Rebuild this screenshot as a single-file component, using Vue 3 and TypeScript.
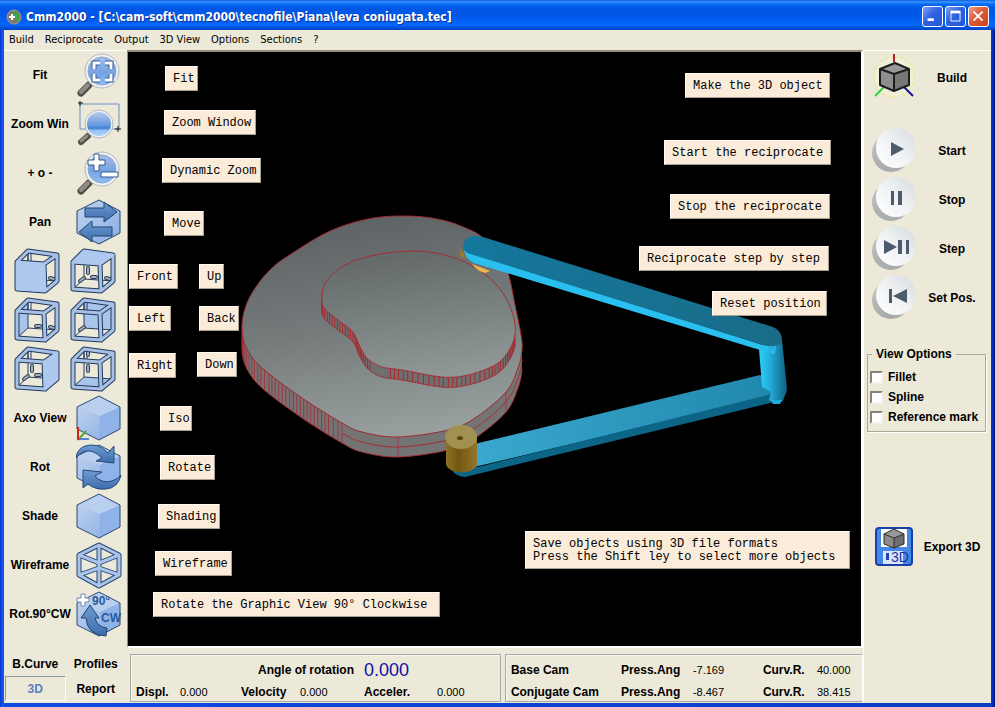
<script setup lang="ts">
import { ref } from 'vue'

type Point = [number, number]

interface Tool {
  id: string
  label: string
}

interface Note {
  text: string
  x: number
  y: number
  w: number
}

const menus = ['Build', 'Reciprocate', 'Output', '3D View', 'Options', 'Sections', '?']

const zoomTools: Tool[] = [
  { id: 'fit', label: 'Fit' },
  { id: 'window', label: 'Zoom Win' },
  { id: 'dynamic', label: '+ o -' },
  { id: 'pan', label: 'Pan' },
]

const viewTools: Tool[] = [
  { id: 'axo', label: 'Axo View' },
  { id: 'rot', label: 'Rot' },
  { id: 'shade', label: 'Shade' },
  { id: 'wire', label: 'Wireframe' },
  { id: 'rot90', label: 'Rot.90°CW' },
]

const stubV = 'M18 22V27'
const stubD = 'M10 35L14 32'
const stubH = 'M22 31H26'
const stubR = 'M36 32L40 33'

const frame = 'M3 16L30 18L31 45L3 43ZM3 16L14 5L43 9L30 18M43 9V35L31 45'

const cubes = [
  { id: 'front', face: 'M3 16L30 18L31 45L3 43Z', solid: true, stubs: stubR },
  { id: 'up', face: 'M3 16L14 5L43 9L30 18Z', solid: true, stubs: stubV + stubD + stubH + stubR },
  { id: 'left', face: 'M3 16L14 5V33L3 43Z', solid: false, stubs: stubH + stubR },
  { id: 'back', face: 'M14 5L43 9V35L14 33Z', solid: false, stubs: stubD },
  { id: 'right', face: 'M30 18L43 9V35L31 45Z', solid: true, stubs: stubV + stubD + stubH },
  { id: 'down', face: 'M3 43L14 33L43 35L31 45Z', solid: false, stubs: 'M18 7V11' + stubV },
]

const players = [
  { label: 'Start', shape: 'M20 16L33 23L20 30Z' },
  { label: 'Stop', shape: 'M20 16H23V30H20ZM27 16H31V30H27Z' },
  { label: 'Step', shape: 'M13 16L26 23L13 30ZM27 16H31V30H27ZM35 16H38V30H35Z' },
  { label: 'Set Pos.', shape: 'M18 16H21V30H18ZM36 16V30L22 23Z' },
]

const options = ref([
  { label: 'Fillet', on: false },
  { label: 'Spline', on: false },
  { label: 'Reference mark', on: false },
])

const notes: Note[] = [
  { text: 'Fit', x: 37, y: 14, w: 33 },
  { text: 'Zoom Window', x: 36, y: 58, w: 92 },
  { text: 'Dynamic Zoom', x: 34, y: 106, w: 99 },
  { text: 'Move', x: 36, y: 159, w: 40 },
  { text: 'Front', x: 1, y: 212, w: 49 },
  { text: 'Up', x: 71, y: 212, w: 25 },
  { text: 'Left', x: 1, y: 254, w: 42 },
  { text: 'Back', x: 71, y: 254, w: 40 },
  { text: 'Right', x: 1, y: 301, w: 47 },
  { text: 'Down', x: 69, y: 300, w: 40 },
  { text: 'Iso', x: 32, y: 354, w: 32 },
  { text: 'Rotate', x: 32, y: 403, w: 55 },
  { text: 'Shading', x: 30, y: 452, w: 62 },
  { text: 'Wireframe', x: 27, y: 499, w: 77 },
  { text: 'Rotate the Graphic View 90° Clockwise', x: 25, y: 540, w: 287 },
  { text: 'Make the 3D object', x: 557, y: 21, w: 145 },
  { text: 'Start the reciprocate', x: 536, y: 88, w: 167 },
  { text: 'Stop the reciprocate', x: 542, y: 142, w: 160 },
  { text: 'Reciprocate step by step', x: 511, y: 194, w: 190 },
  { text: 'Reset position', x: 584, y: 239, w: 115 },
  {
    text: 'Save objects using 3D file formats\nPress the Shift ley to select more objects',
    x: 397,
    y: 479,
    w: 325,
  },
]

/* Cam outlines, clockwise from the leftmost point of the top face. */
const baseCam: Point[] = [
  [242, 325], [247, 303], [258, 284], [272, 268], [288, 256], [328, 232], [368, 219],
  [408, 216], [442, 220], [468, 229], [482, 237], [497, 253], [508, 273], [515, 305],
  [521, 335], [522, 350], [518, 368], [506, 392], [475, 418], [448, 430], [398, 437],
  [362, 432], [342, 423], [302, 398], [262, 368], [246, 347],
]
const conjugateCam: Point[] = [
  [322, 298], [326, 282], [345, 265], [375, 255], [415, 251], [452, 257], [482, 272],
  [502, 292], [513, 315], [515, 335], [508, 352], [495, 365], [468, 375], [442, 377],
  [402, 370], [382, 367], [368, 359], [360, 347], [353, 332], [338, 320], [324, 308],
]

const STEPS = 24

function smooth(points: Point[]): Point[] {
  const n = points.length
  const out: Point[] = []
  for (let i = 0; i < n; i++) {
    const a = points[(i + n - 1) % n]
    const b = points[i]
    const c = points[(i + 1) % n]
    const d = points[(i + 2) % n]
    for (let s = 0; s < STEPS; s++) {
      const t = s / STEPS
      const at = (k: 0 | 1) =>
        0.5 *
        (2 * b[k] +
          (c[k] - a[k]) * t +
          (2 * a[k] - 5 * b[k] + 4 * c[k] - d[k]) * t * t +
          (3 * b[k] - a[k] - 3 * c[k] + d[k]) * t * t * t)
      out.push([at(0), at(1)])
    }
  }
  return out
}

const toPath = (pts: Point[], dy = 0) =>
  'M' + pts.map(([x, y]) => `${x.toFixed(1)} ${(y + dy).toFixed(1)}`).join('L')

function wall(curve: Point[], from: number, depth: number) {
  const rim = [...curve.slice(from * STEPS), curve[0]]
  return {
    rim,
    fill: toPath(rim) + 'L' + toPath([...rim].reverse(), depth).slice(1) + 'Z',
    lower: toPath(rim, depth),
  }
}

function ribs(rim: Point[], depth: number, gap: number, x0: number, x1: number) {
  let d = ''
  let run = gap
  for (let i = 1; i < rim.length; i++) {
    const [x, y] = rim[i]
    run += Math.hypot(x - rim[i - 1][0], y - rim[i - 1][1])
    if (run >= gap && x >= x0 && x <= x1) {
      d += `M${x.toFixed(1)} ${y.toFixed(1)}v${depth}`
      run = 0
    }
  }
  return d
}

const baseCurve = smooth(baseCam)
const conjCurve = smooth(conjugateCam)
const baseWall = wall(baseCurve, 15, 20)
const conjWall = wall(conjCurve, 9, 10)

const scene = {
  baseTop: toPath(baseCurve) + 'Z',
  conjTop: toPath(conjCurve) + 'Z',
  baseMid: toPath(baseWall.rim.filter(([x], i) => x > 342 || i < STEPS), 10),
  baseRibs: ribs(baseWall.rim, 20, 4, 240, 343) + 'M398 437v20M506 392v20',
  conjRibs:
    ribs(conjWall.rim, 10, 3, 320, 370) +
    ribs(conjWall.rim, 10, 4, 389, 490) +
    ribs(conjWall.rim, 10, 3, 490, 516),
}
</script>

<template>
  <div class="window">
    <header class="title-bar">
      <svg class="app-icon" viewBox="0 0 16 16" aria-hidden="true">
        <circle cx="8" cy="8" r="7" fill="#80776f" stroke="#a59b90" />
        <path d="M7 2A6 6 0 0 1 11 13Q8 9 7 2Z" fill="#3da548" />
        <path d="M6 5V11M3 8H9" stroke="#fff" stroke-width="2" />
      </svg>
      <h1>Cmm2000 - [C:\cam-soft\cmm2000\tecnofile\Piana\leva coniugata.tec]</h1>
      <div class="window-buttons">
        <button type="button" aria-label="Minimize">
          <svg viewBox="0 0 21 21"><path d="M5 14H12" stroke="#fff" stroke-width="3" /></svg>
        </button>
        <button type="button" aria-label="Maximize">
          <svg viewBox="0 0 21 21">
            <path d="M5 5.500H16" stroke="#fff" stroke-width="3" />
            <path d="M5.500 6V15.500H15.500V6" fill="none" stroke="#fff" />
          </svg>
        </button>
        <button type="button" class="close" aria-label="Close">
          <svg viewBox="0 0 21 21"><path d="M5 5L15 15M15 5L5 15" stroke="#fff" stroke-width="2" /></svg>
        </button>
      </div>
    </header>

    <nav class="menu-bar">
      <button v-for="menu in menus" :key="menu" type="button">{{ menu }}</button>
    </nav>

    <svg class="defs" aria-hidden="true">
      <defs>
        <linearGradient id="hexFill" x1="0" y1="0" x2="1" y2="1">
          <stop offset="0" stop-color="#c3d5f0" />
          <stop offset="1" stop-color="#86ace4" />
        </linearGradient>
        <linearGradient id="arrowFill" x1="0" y1="0" x2="0" y2="1">
          <stop offset="0" stop-color="#6d9bd2" />
          <stop offset="1" stop-color="#3d6cab" />
        </linearGradient>
        <linearGradient id="lensFill" x1="0" y1="0" x2="0" y2="1">
          <stop offset="0" stop-color="#a3bfe8" />
          <stop offset="0.55" stop-color="#76a2e2" />
          <stop offset="1" stop-color="#8fbcf4" />
        </linearGradient>
        <linearGradient id="lensBand" x1="0" y1="0" x2="0" y2="1">
          <stop offset="0" stop-color="#b4cbee" />
          <stop offset="0.6" stop-color="#6294dc" />
          <stop offset="0.62" stop-color="#3f83d4" />
          <stop offset="0.72" stop-color="#4d8edd" />
          <stop offset="0.74" stop-color="#94c0f5" />
          <stop offset="1" stop-color="#b2d4fb" />
        </linearGradient>
        <linearGradient id="knobFill" x1="1" y1="0" x2="0" y2="1">
          <stop offset="0" stop-color="#d5dade" />
          <stop offset="0.5" stop-color="#f0f2f4" />
          <stop offset="1" stop-color="#ffffff" />
        </linearGradient>
        <linearGradient id="knobShade" x1="0" y1="0" x2="0" y2="1">
          <stop offset="0" stop-color="#c8c8c2" />
          <stop offset="1" stop-color="#a7aaab" />
        </linearGradient>
      </defs>
    </svg>

    <div class="workspace">
      <aside class="left-panel">
        <button v-for="tool in zoomTools" :key="tool.id" type="button" class="tool">
          <span>{{ tool.label }}</span>
          <svg class="icon" viewBox="0 0 46 49" aria-hidden="true">
            <template v-if="tool.id === 'fit' || tool.id === 'dynamic'">
              <path d="M13 35L5 43" stroke="#504c48" stroke-width="7" stroke-linecap="round" />
              <path d="M12 35L5 42" stroke="#918b84" stroke-width="4" stroke-linecap="round" />
              <circle cx="26" cy="21" r="17" fill="#eef0f1" stroke="#b4b8bc" />
              <circle cx="26" cy="21" r="14" fill="url(#lensFill)" stroke="#8fa8cb" />
            </template>
            <g v-if="tool.id === 'fit'" fill="none" stroke-linejoin="miter">
              <path d="M18 19V13H24M29 13H35V19M35 24V30H29M24 30H18V24" stroke="#31588f" stroke-width="5" />
              <path d="M18 19V13H24M29 13H35V19M35 24V30H29M24 30H18V24" stroke="#fff" stroke-width="3" />
            </g>
            <g v-if="tool.id === 'dynamic'" stroke="#33598f" fill="#fff">
              <path d="M18 6H23V12H29V17H23V23H18V17H12V12H18Z" />
              <path d="M25 24H42V29H25Z" />
            </g>
            <g v-if="tool.id === 'window'">
              <path d="M4 5H43V30H4Z" fill="none" stroke="#6b8fc6" />
              <path d="M12 37L5 43" stroke="#504c48" stroke-width="6" stroke-linecap="round" />
              <path d="M11 37L5 42" stroke="#918b84" stroke-width="3" stroke-linecap="round" />
              <circle cx="23" cy="25" r="14" fill="#eef0f1" stroke="#b4b8bc" />
              <circle cx="23" cy="25" r="12" fill="url(#lensBand)" />
              <path d="M4 2V7M2 4H7M42 27V33M39 30H45" stroke="#111" />
            </g>
            <g v-if="tool.id === 'pan'" stroke="#21446f" stroke-linejoin="round">
              <path d="M23 3L44 14V36L23 47L1 36V14Z" fill="url(#hexFill)" />
              <path d="M9 11H28V5L41 15L28 25V20H9Z" fill="url(#arrowFill)" />
              <path d="M36 30H16V24L3 35L16 45V39H36Z" fill="url(#arrowFill)" />
            </g>
          </svg>
        </button>

        <div class="cube-grid">
          <button v-for="cube in cubes" :key="cube.id" type="button" :aria-label="cube.id">
            <svg class="icon" viewBox="0 0 46 49" aria-hidden="true">
              <path v-if="!cube.solid" :d="cube.face" fill="#a9c4ea" />
              <path d="M14 5V33L3 43M14 33L43 35" fill="none" stroke="#233d60" />
              <path d="M17 6V15M14 7V15" stroke="#233d60" />
              <path :d="cube.stubs" stroke="#2e3f55" stroke-width="4" stroke-linecap="round" />
              <path :d="cube.stubs" stroke="#a5aebc" stroke-width="2" stroke-linecap="round" />
              <g fill="none" stroke-linejoin="round">
                <path :d="frame" stroke="#1f3a5e" stroke-width="5" />
                <path :d="frame" stroke="#a9c0e4" stroke-width="3" />
              </g>
              <path v-if="cube.solid" :d="cube.face" fill="#aec8ee" stroke="#aec8ee" stroke-width="2" />
            </svg>
          </button>
        </div>

        <button v-for="tool in viewTools" :key="tool.id" type="button" class="tool">
          <span>{{ tool.label }}</span>
          <svg class="icon" viewBox="0 0 46 49" aria-hidden="true">
            <g v-if="tool.id !== 'wire'">
              <path d="M23 3L44 14V36L23 47L1 36V14Z" fill="url(#hexFill)" />
              <path d="M23 3L44 14L24 23L1 14Z" fill="#b9cfef" />
              <path d="M24 23L44 14V36L23 47Z" fill="#8fb3e8" />
              <path d="M23 3L44 14V36L23 47L1 36V14Z" fill="none" stroke="#2c4a73" />
            </g>
            <g v-if="tool.id === 'axo'" stroke-width="2">
              <path d="M2 47L10 38" stroke="#58a832" />
              <path d="M2 46H13" stroke="#5b82c8" />
              <path d="M2 34V47" stroke="#d2201c" />
            </g>
            <g v-if="tool.id === 'rot'" fill="url(#arrowFill)" stroke="#244a7d" stroke-linejoin="round">
              <path d="M0 16Q1 7 9 4Q22 0 32 11L38 4V21L20 19L26 16Q16 6 7 10Q3 12 0 16Z" />
              <path d="M45 33Q42 46 30 47Q19 48 12 42L7 46V28L26 30L19 34Q26 42 36 39Q42 37 45 33Z" />
            </g>
            <g v-if="tool.id === 'wire'" fill="none" stroke-linejoin="round">
              <path d="M23 5L43 15V35L23 46L3 35V15ZM23 5V46M3 15L23 23L43 15M3 35L23 28L43 35" stroke="#294970" stroke-width="5" />
              <path d="M23 5L43 15V35L23 46L3 35V15ZM23 5V46M3 15L23 23L43 15M3 35L23 28L43 35" stroke="#a9c3eb" stroke-width="3" />
            </g>
            <g v-if="tool.id === 'rot90'">
              <path d="M5 5H9V9H13V13H9V17H5V13H1V9H5Z" fill="#fff" stroke="#7089ad" />
              <text x="16" y="16" class="glyph">90°</text>
              <text x="25" y="33" class="glyph">CW</text>
              <path d="M14 16L23 29H19Q21 38 31 39L30 47Q11 46 10 29H5Z" fill="url(#arrowFill)" stroke="#21446f" />
            </g>
          </svg>
        </button>

        <div class="page-tabs">
          <button type="button">B.Curve</button>
          <button type="button">Profiles</button>
          <button type="button" class="active">3D</button>
          <button type="button">Report</button>
        </div>
      </aside>

      <main class="center">
        <section class="viewport" aria-label="3D view">
          <svg class="scene" viewBox="128 52 733 595" aria-hidden="true">
            <defs>
              <linearGradient id="steel" x1="0.3" y1="0" x2="0.5" y2="1">
                <stop offset="0" stop-color="#5c6263" />
                <stop offset="0.5" stop-color="#757b7b" />
                <stop offset="1" stop-color="#98a09f" />
              </linearGradient>
              <linearGradient id="steelSmall" x1="0.3" y1="0" x2="0.5" y2="1">
                <stop offset="0" stop-color="#626868" />
                <stop offset="1" stop-color="#8f9797" />
              </linearGradient>
              <linearGradient id="armDark" x1="0" y1="0" x2="1" y2="0">
                <stop offset="0" stop-color="#14779c" />
                <stop offset="1" stop-color="#196c88" />
              </linearGradient>
              <linearGradient id="armLight" x1="0" y1="0" x2="1" y2="0">
                <stop offset="0" stop-color="#3ba9d0" />
                <stop offset="1" stop-color="#1f86ab" />
              </linearGradient>
              <linearGradient id="pivot" x1="0" y1="0" x2="1" y2="0">
                <stop offset="0" stop-color="#2fd0fa" />
                <stop offset="0.45" stop-color="#21a6d3" />
                <stop offset="1" stop-color="#0f5d7c" />
              </linearGradient>
              <linearGradient id="brass" x1="0" y1="0" x2="1" y2="0">
                <stop offset="0" stop-color="#8e7120" />
                <stop offset="0.4" stop-color="#725711" />
                <stop offset="1" stop-color="#94772b" />
              </linearGradient>
            </defs>

            <path :d="baseWall.fill" fill="#747474" />
            <path :d="scene.baseTop" fill="url(#steel)" />
            <g fill="none" stroke="#a8282f">
              <path :d="scene.baseTop" />
              <path :d="baseWall.lower" />
              <path :d="scene.baseMid" />
              <path :d="scene.baseRibs" stroke-opacity="0.800" />
            </g>

            <path :d="conjWall.fill" fill="#6f6f70" />
            <path :d="scene.conjTop" fill="url(#steelSmall)" />
            <g fill="none" stroke="#a8282f">
              <path :d="scene.conjTop" />
              <path :d="conjWall.lower" />
              <path :d="scene.conjRibs" />
            </g>

            <path d="M461 248L466 259L460 256Z" fill="#a27a1e" />
            <path d="M472 264L490 271L485 273Q477 271 472 264Z" fill="#efb84b" />

            <path d="M462 447L760 375L787 390L773 396L470 468Z" fill="url(#armLight)" />
            <path d="M452 466L478 467L768 395L787 390L785 396L770 403L465 477Q455 476 452 470Z" fill="#0c6587" />
            <path d="M759 349L782 340L787 388L783 401L776 404L769 400L771 392L762 387Z" fill="url(#pivot)" />
            <path d="M770 400H782L780 404H773Z" fill="#1fa9d8" />
            <path d="M464 249L763 345L775 346V354L760 350L474 263Q465 259 464 249Z" fill="#29bfee" />
            <path d="M768 344L776 344V350L768 352Z" fill="#27b3df" />
            <path d="M463 249Q463 235 477 236L483 237L773 327Q783 331 782 343Q775 348 763 345L467 253Z" fill="url(#armDark)" />

            <path d="M446 438V465A16 10 0 0 0 477 465V438Z" fill="url(#brass)" />
            <ellipse cx="461" cy="437" rx="16" ry="12" fill="#a19150" />
            <ellipse cx="460" cy="438" rx="3" ry="2" fill="#5c4712" />
          </svg>

          <span
            v-for="note in notes"
            :key="note.text"
            class="note"
            :style="{ left: note.x + 'px', top: note.y + 'px', width: note.w + 'px' }"
            >{{ note.text }}</span
          >
        </section>

        <footer class="status">
          <dl class="motion">
            <dt class="angle">Angle of rotation</dt>
            <dd class="angle-value">0.000</dd>
            <dt>Displ.</dt>
            <dd>0.000</dd>
            <dt>Velocity</dt>
            <dd>0.000</dd>
            <dt>Acceler.</dt>
            <dd>0.000</dd>
          </dl>
          <div class="cams">
            <table>
              <tbody>
                <tr>
                  <th scope="row" class="cam">Base Cam</th>
                  <th class="press">Press.Ang</th>
                  <td class="angle-cell">-7.169</td>
                  <th class="curv">Curv.R.</th>
                  <td>40.000</td>
                </tr>
                <tr>
                  <th scope="row">Conjugate Cam</th>
                  <th>Press.Ang</th>
                  <td>-8.467</td>
                  <th>Curv.R.</th>
                  <td>38.415</td>
                </tr>
              </tbody>
            </table>
          </div>
        </footer>
      </main>

      <aside class="right-panel">
        <button type="button" class="action">
          <svg class="icon" viewBox="0 0 46 49" aria-hidden="true">
            <circle cx="23" cy="24" r="20" fill="#efefdc" stroke="#ece99f" stroke-width="2" stroke-dasharray="3 2" />
            <path d="M23 1V9" stroke="#b5202a" stroke-width="2" />
            <path d="M13 34L4 43" stroke="#35d23f" stroke-width="2" />
            <path d="M33 34L42 43" stroke="#140f9c" stroke-width="2" />
            <path d="M9 16L23 21V38L9 32Z" fill="#8e8e8e" />
            <path d="M23 21L38 16V32L23 38Z" fill="#767676" />
            <path d="M9 16L24 10L38 16L23 21Z" fill="#999" />
            <path d="M9 16L24 10L38 16V32L23 38L9 32ZM9 16L23 21L38 16M23 21V38" fill="none" stroke="#1e1e1e" stroke-width="2" stroke-linejoin="round" />
          </svg>
          <span>Build</span>
        </button>

        <div class="players">
          <button v-for="player in players" :key="player.label" type="button" class="action">
            <svg class="icon" viewBox="0 0 46 49" aria-hidden="true">
              <circle cx="20" cy="27" r="19" fill="url(#knobShade)" />
              <circle cx="25" cy="22" r="20" fill="url(#knobFill)" />
              <path :d="player.shape" fill="#4e5b6d" />
            </svg>
            <span>{{ player.label }}</span>
          </button>
        </div>

        <fieldset class="view-options">
          <legend>View Options</legend>
          <label v-for="option in options" :key="option.label">
            <input v-model="option.on" type="checkbox" />
            <span>{{ option.label }}</span>
          </label>
        </fieldset>

        <button type="button" class="action export">
          <svg class="icon" viewBox="0 0 46 49" aria-hidden="true">
            <rect x="5" y="6" width="36" height="37" rx="3" fill="#4488e8" stroke="#1b3fa8" stroke-width="2" />
            <path d="M10 7H36V25H10Z" fill="#fff" />
            <path d="M12 29H32V42H12Z" fill="#dbe6f8" />
            <path d="M15 31H18V38H15Z" fill="#1c46b4" />
            <path d="M13 12L23 16V26L13 22Z" fill="#8c8c8c" />
            <path d="M23 16L33 12V22L23 26Z" fill="#6e6e6e" />
            <path d="M13 12L23 7L33 12L23 16Z" fill="#999" />
            <path d="M13 12L23 7L33 12V22L23 26L13 22ZM13 12L23 16L33 12M23 16V26" fill="none" stroke="#2a2a2a" stroke-linejoin="round" />
            <text x="20" y="40" class="glyph export-glyph">3D</text>
          </svg>
          <span>Export 3D</span>
        </button>
      </aside>
    </div>
  </div>
</template>

<style>
body {
  margin: 0;
  background: #ece9d8;
}
</style>

<style scoped>
.window {
  box-sizing: border-box;
  display: flex;
  flex-direction: column;
  min-height: 100vh;
  padding: 0 4px 4px;
  background: linear-gradient(90deg, #0831d9, #1660ee 3px, #0b4be0 4px, #0b3cc4 calc(100% - 4px), #0a35c0 calc(100% - 3px), #00138c);
  color: #000;
  font-family: "Liberation Sans", Arial, sans-serif;
  font-size: 12px;
  font-weight: 700;
  line-height: 14px;
}

button {
  margin: 0;
  padding: 0;
  border: 0;
  background: none;
  color: inherit;
  font: inherit;
}

.icon {
  display: block;
  width: 46px;
  height: 49px;
}

.defs {
  width: 0;
  height: 0;
  position: absolute;
}

.glyph {
  fill: #2a5a9c;
  font-size: 12px;
  font-weight: 700;
}

.export-glyph {
  fill: #1734a8;
  font-size: 14px;
  font-weight: 400;
}

/* Title bar */
.title-bar {
  display: flex;
  align-items: center;
  height: 30px;
  margin: 0 -4px;
  padding: 3px 6px 0;
  box-sizing: border-box;
  background: linear-gradient(#0a5be0, #3a93ff 2px, #0a6cf5 4px, #0257e4 8px, #0058ea 16px, #0566fb 25px, #0350d6 28px, #0144c4);
}

.app-icon {
  width: 16px;
  height: 16px;
  margin-right: 4px;
}

.title-bar h1 {
  flex: 1;
  margin: 0;
  overflow: hidden;
  white-space: nowrap;
  color: #fff;
  font-family: "DejaVu Sans Condensed", "DejaVu Sans", sans-serif;
  font-size: 12px;
  font-weight: 700;
  line-height: 20px;
  text-shadow: 1px 1px 0 #0b2f93;
}

.window-buttons {
  display: flex;
  gap: 2px;
}

.window-buttons button {
  box-sizing: border-box;
  width: 21px;
  height: 21px;
  border: 1px solid #fff;
  border-radius: 3px;
  background: linear-gradient(135deg, #7ba0f3, #2f62e0 45%, #2356d8);
}

.window-buttons .close {
  background: linear-gradient(135deg, #f0a088, #dd5a34 45%, #c8431f);
}

.window-buttons svg {
  display: block;
  width: 19px;
  height: 19px;
}

/* Menu bar */
.menu-bar {
  display: flex;
  gap: 11px;
  height: 20px;
  padding-left: 5px;
  background: #ece9d8;
  font-family: "DejaVu Sans Condensed", "DejaVu Sans", sans-serif;
  font-size: 11px;
  font-weight: 400;
}

.workspace {
  flex: 1;
  display: flex;
  background: #ece9d8;
}

/* Left toolbar */
.left-panel {
  display: flex;
  flex-direction: column;
  flex: none;
  width: 123px;
  box-shadow: inset 0 1px 0 #fff;
}

.tool {
  display: grid;
  grid-template-columns: 72px 46px;
  align-items: center;
  height: 49px;
}

.cube-grid {
  display: grid;
  grid-template-columns: 46px 46px;
  column-gap: 10px;
  padding-left: 10px;
}

.page-tabs {
  display: grid;
  grid-template-columns: 1fr 1fr;
  grid-auto-rows: 25px;
  margin: auto 1px 2px;
}

.page-tabs button {
  border: 1px solid transparent;
}

.page-tabs .active {
  border-color: #8d9aa6 #fff #fff #8d9aa6;
  color: #5b7fc4;
}

/* Viewport and status */
.center {
  display: flex;
  flex: 1;
  flex-direction: column;
  min-width: 0;
}

.viewport {
  position: relative;
  flex: 1;
  overflow: hidden;
  border: solid;
  border-width: 2px 2px 2px 1px;
  border-color: #8e8d80 #fff #fff #8e8d80;
  background: #000;
}

.scene {
  position: absolute;
  top: 0;
  left: 0;
  width: 733px;
  height: 595px;
}

.note {
  position: absolute;
  box-sizing: border-box;
  padding: 6px 0 4px 7px;
  border: 1px solid;
  border-color: #fffaf2 #a9a094 #a9a094 #fffaf2;
  background: #fbebd9;
  font-family: "Liberation Mono", "Courier New", monospace;
  font-size: 12px;
  font-weight: 400;
  line-height: 13px;
  white-space: pre;
}

.status {
  display: flex;
  gap: 4px;
  padding: 6px 0 1px 3px;
}

.motion,
.cams {
  box-sizing: border-box;
  height: 48px;
  margin: 0;
  border: 1px solid #a5aaa4;
  box-shadow: inset 1px 1px 0 #f8f7f0;
}

.motion {
  display: grid;
  flex: 371 1 0;
  grid-template-columns: 44px 61px 59px 64px 73px 1fr;
  grid-template-rows: 30px 14px;
  align-items: center;
  padding-left: 5px;
}

.motion dd,
.cams td {
  margin: 0;
  font-size: 11px;
  font-weight: 400;
}

.motion .angle {
  grid-column: 1 / 5;
  padding-right: 10px;
  text-align: right;
}

.motion .angle-value {
  grid-column: 5 / 7;
  color: #1010a8;
  font-size: 18px;
}

.cams {
  flex: 358 1 0;
  border-right-color: #fff;
  padding-left: 5px;
}

.cams table {
  border-collapse: collapse;
  table-layout: fixed;
  width: 100%;
}

.cams th,
.cams td {
  height: 14px;
  padding: 0;
  text-align: left;
  white-space: nowrap;
}

.cams tr:first-child > * {
  height: 30px;
}

.cams .cam {
  width: 110px;
}

.cams .press {
  width: 72px;
}

.cams .angle-cell {
  width: 70px;
}

.cams .curv {
  width: 54px;
}

/* Right panel */
.right-panel {
  flex: none;
  width: 128px;
  box-sizing: border-box;
  padding-top: 2px;
  border-top: 1px solid #fff;
  border-left: 1px solid #fff;
}

.action {
  display: grid;
  grid-template-columns: 46px 1fr;
  column-gap: 4px;
  align-items: center;
  width: 100%;
  padding: 0 8px 0 7px;
}

.players {
  margin-top: 24px;
}

.view-options {
  display: grid;
  gap: 6px;
  margin: 25px 5px 0 3px;
  padding: 9px 0 7px 2px;
  border: 1px solid #aca899;
  box-shadow: 1px 1px 0 #fff;
}

.view-options legend {
  margin-left: 2px;
  padding: 0 4px;
}

.view-options label {
  display: flex;
  align-items: center;
  gap: 5px;
}

.view-options input {
  appearance: none;
  box-sizing: border-box;
  width: 13px;
  height: 13px;
  margin: 0;
  border: 2px solid;
  border-color: #85837a #f4f2e8 #f4f2e8 #85837a;
  background: #fff;
}

.view-options input:checked {
  background: #3a6ea5;
}

.export {
  margin-top: 90px;
}
</style>
